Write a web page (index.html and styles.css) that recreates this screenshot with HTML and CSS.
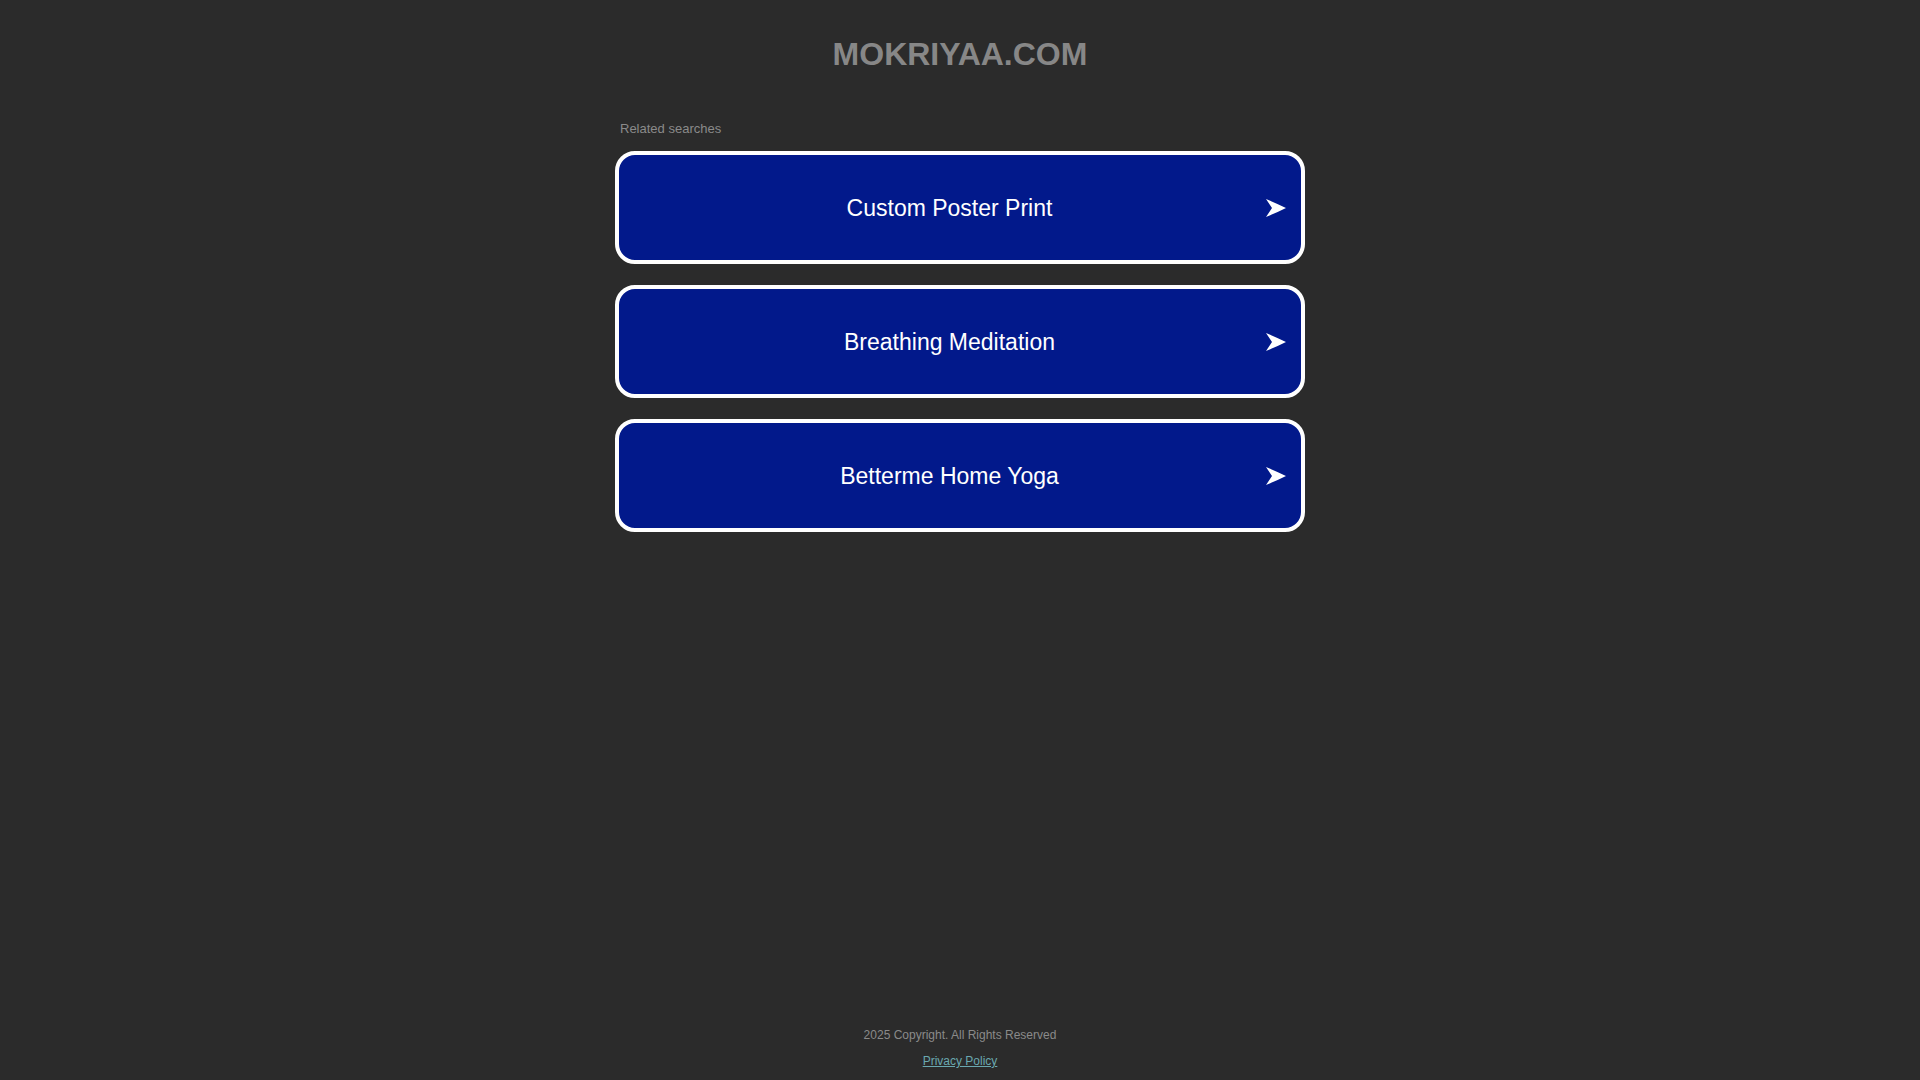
FILE: index.html
```html
<!DOCTYPE html>
<html lang="en">
<head>
<meta charset="utf-8">
<title>mokriyaa.com</title>
<link rel="stylesheet" href="styles.css">
</head>
<body>
<header class="site-header">
  <h1 class="domain">MOKRIYAA.COM</h1>
</header>
<main class="content">
  <div class="related-label">Related searches</div>
  <ul class="search-list">
    <li><a class="search-item" href="#"><span class="search-text">Custom Poster Print</span><svg class="arrow" viewBox="0 0 20 18" width="20" height="18"><path d="M0 0 Q10 4 20 9 Q10 14 0 18 L6 9 Z" fill="#fff"/></svg></a></li>
    <li><a class="search-item" href="#"><span class="search-text">Breathing Meditation</span><svg class="arrow" viewBox="0 0 20 18" width="20" height="18"><path d="M0 0 Q10 4 20 9 Q10 14 0 18 L6 9 Z" fill="#fff"/></svg></a></li>
    <li><a class="search-item" href="#"><span class="search-text">Betterme Home Yoga</span><svg class="arrow" viewBox="0 0 20 18" width="20" height="18"><path d="M0 0 Q10 4 20 9 Q10 14 0 18 L6 9 Z" fill="#fff"/></svg></a></li>
  </ul>
</main>
<footer class="site-footer">
  <div class="copyright">2025 Copyright. All Rights Reserved</div>
  <a class="privacy" href="#">Privacy Policy</a>
</footer>
</body>
</html>
```

FILE: styles.css
```css
* {
  box-sizing: border-box;
}

html, body {
  margin: 0;
  padding: 0;
}

body {
  min-height: 100vh;
  display: flex;
  flex-direction: column;
  background: #2b2b2b;
  font-family: "Liberation Sans", Arial, sans-serif;
  color: #888;
}

.site-header {
  padding-top: 36px;
}

.domain {
  margin: 0;
  text-align: center;
  font-size: 32px;
  line-height: 37px;
  font-weight: 700;
  color: #878787;
}

.content {
  width: 690px;
  margin: 48px auto 0;
}

.related-label {
  padding-left: 5px;
  font-size: 13px;
  line-height: 15px;
  color: #8a8a8a;
  margin-bottom: 15px;
}

.search-list {
  list-style: none;
  margin: 0;
  padding: 0;
  display: flex;
  flex-direction: column;
  gap: 21px;
}

.search-item {
  position: relative;
  display: flex;
  align-items: center;
  justify-content: center;
  height: 113px;
  padding-top: 2px;
  padding-right: 21px;
  border: 4px solid #fff;
  border-radius: 20px;
  background: #02198b;
  color: #fff;
  text-decoration: none;
  font-size: 23px;
  line-height: 27px;
}

.arrow {
  position: absolute;
  right: 15px;
  top: 50%;
  margin-top: -9px;
}

.site-footer {
  margin-top: auto;
  padding-bottom: 12px;
  display: flex;
  flex-direction: column;
  align-items: center;
  gap: 12px;
  font-size: 12px;
  line-height: 14px;
}

.copyright {
  color: #8a8a8a;
}

.privacy {
  color: #6aa8b0;
  text-decoration: underline;
}
```
